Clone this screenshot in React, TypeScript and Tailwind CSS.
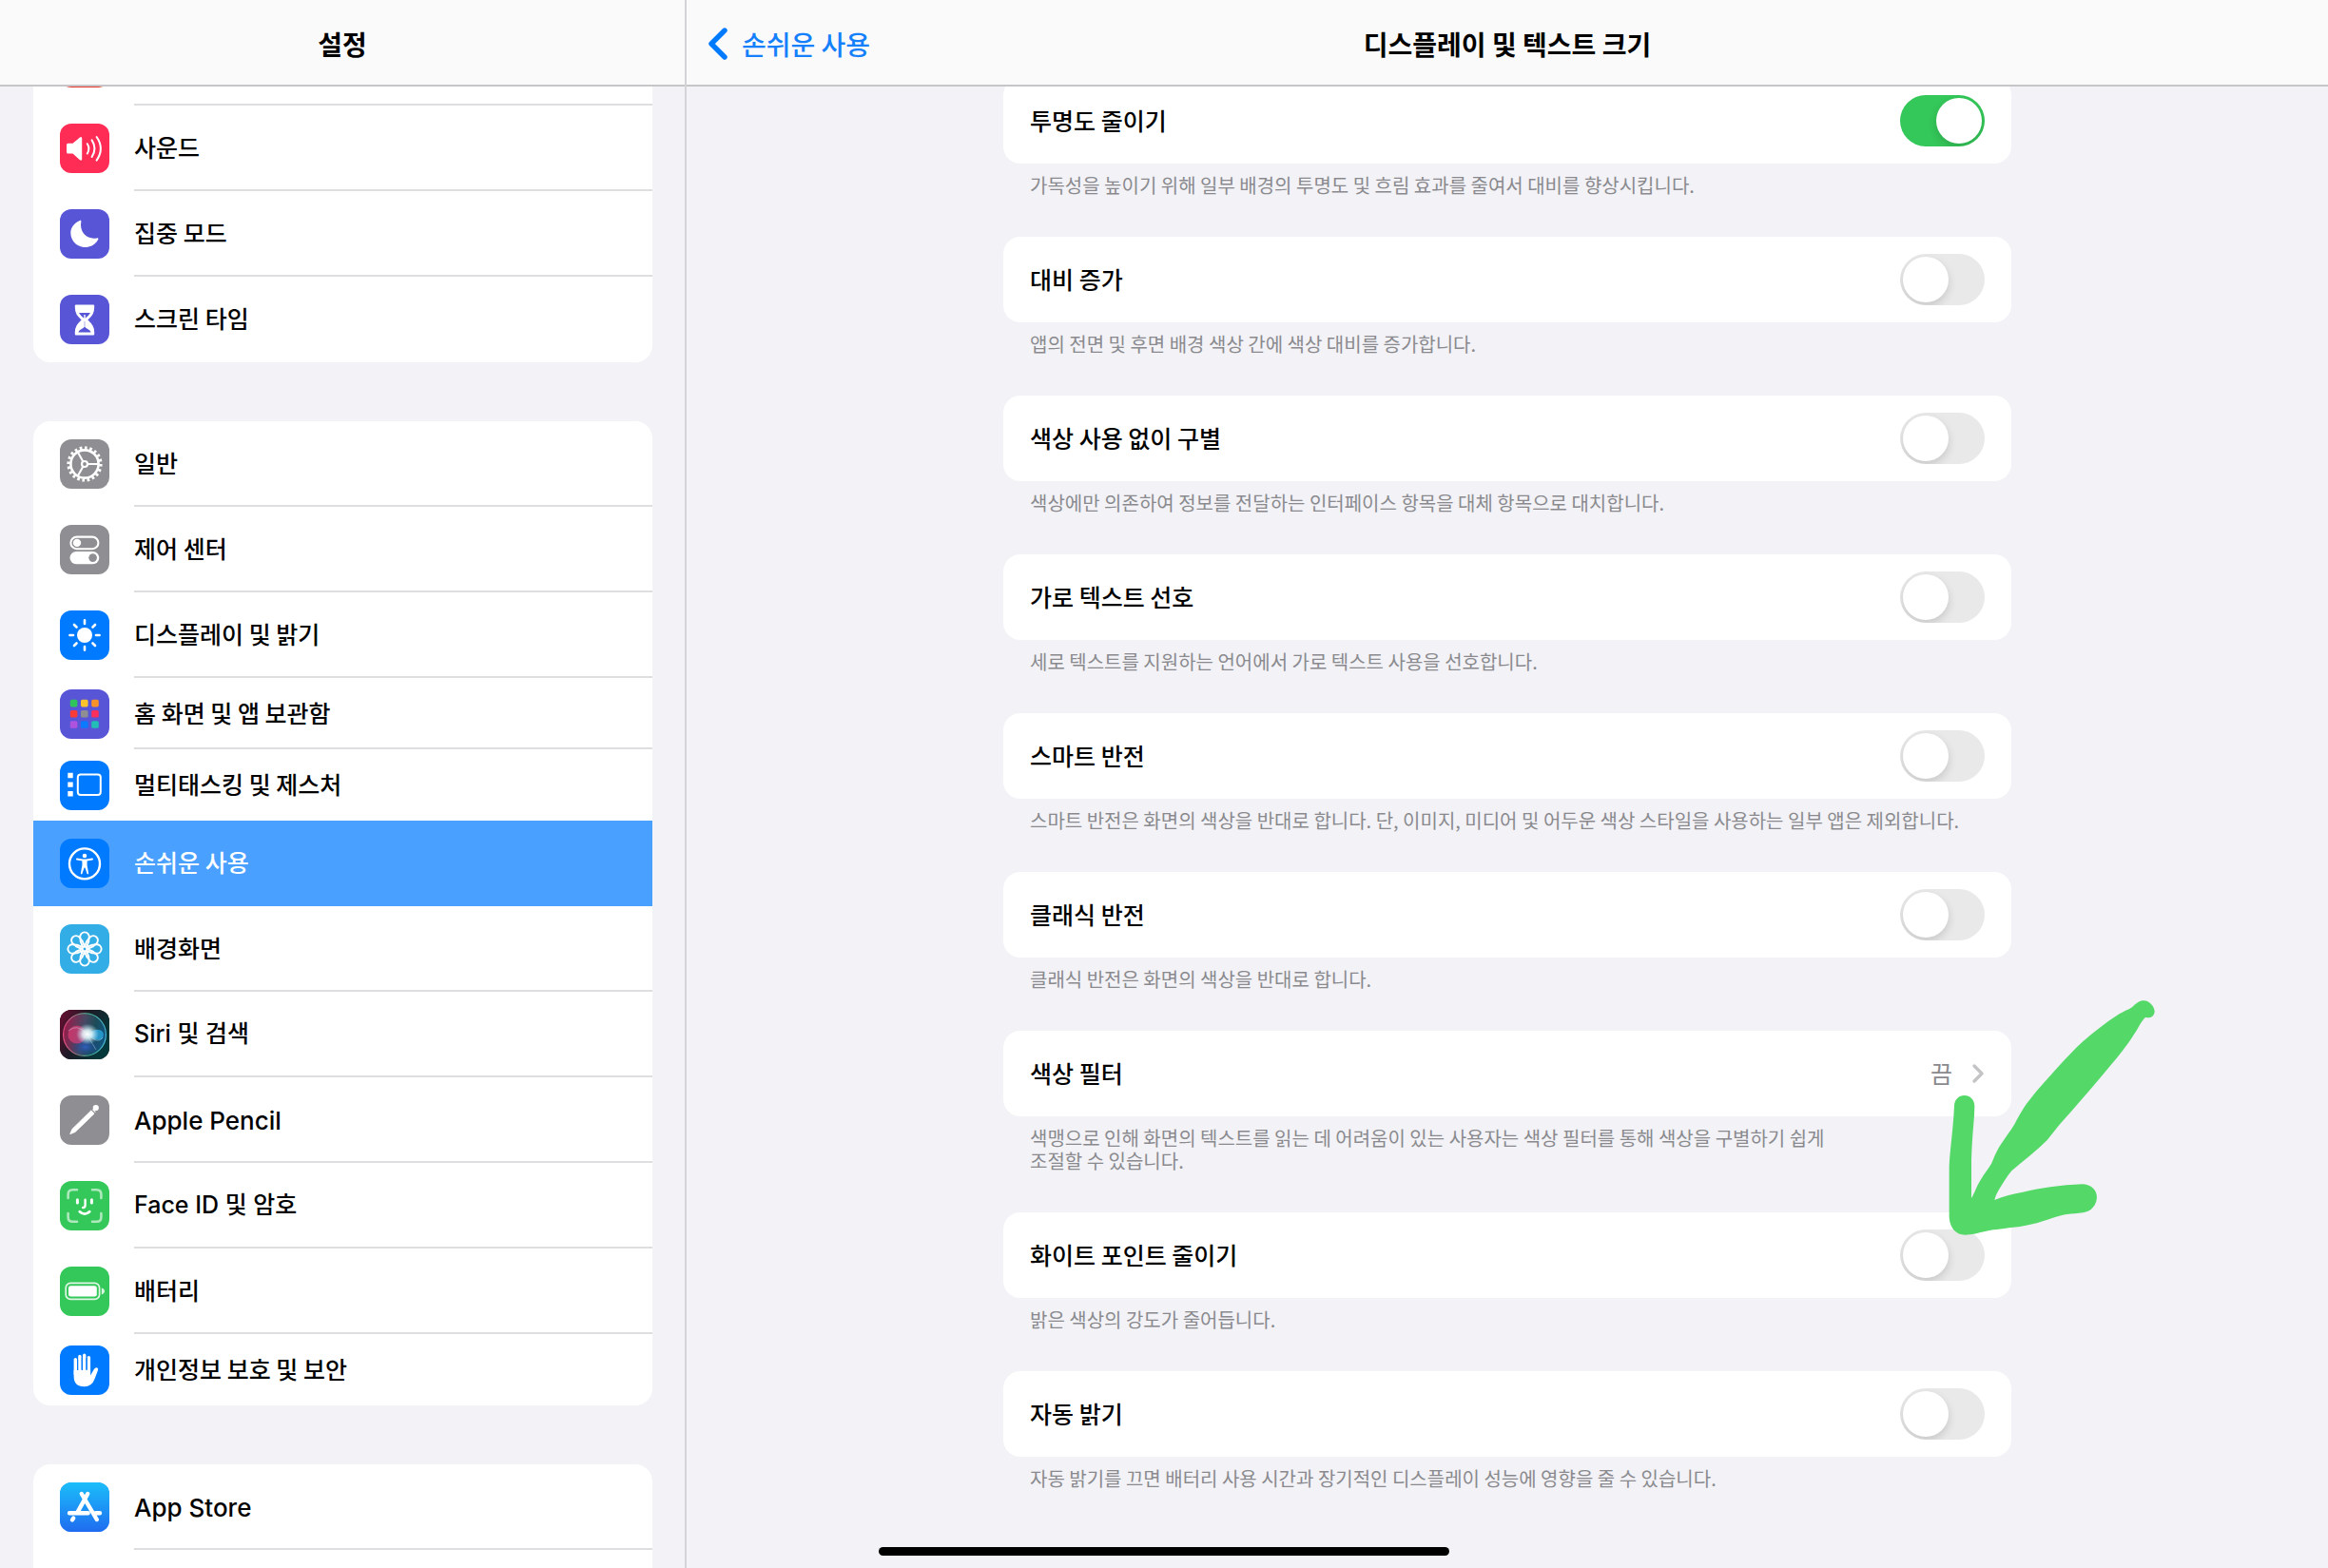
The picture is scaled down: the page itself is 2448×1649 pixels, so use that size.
import { useState } from 'react';
import type { ReactNode } from 'react';
import clsx from 'clsx';

type SidebarItem = {
  id: string;
  label: string;
  icon: ReactNode;
  bg: string;
  compact?: boolean;
  active?: boolean;
  noLine?: boolean;
};

type Option = {
  id: string;
  label: string;
  note: string;
  value?: string;
  marked?: boolean;
};

const SoundIcon = () => (
  <>
    <path d="M8.5 20.8H13.5L21 14.4Q23.2 13 23.2 15.5V37Q23.2 39.6 21 38.2L13.5 31.6H8.5Q7 31.6 7 30V22.4Q7 20.8 8.5 20.8Z" fill="#fff" />
    <path d="M28.8 21.2Q32 26.2 28.8 31.4M33.6 17.4Q39.4 26.2 33.6 35M38.6 14Q47.2 26.2 38.6 38.6" fill="none" stroke="#fff" strokeWidth="2" strokeLinecap="round" />
  </>
);

const MoonIcon = () => (
  <path d="M20.4 12.2C22 11.4 22.6 12 22.3 13.4C20.4 23.8 28 32.2 38.6 30.4C40.4 30.1 40.8 30.8 40 32.2C37.4 37 32.4 40 26.6 40C18 40 11.3 33.4 11.3 25C11.3 19.4 14.8 14.6 20.4 12.2Z" fill="#fff" />
);

const HourglassIcon = () => (
  <>
    <path d="M16.8 11.4H35.2V13C35.2 20 32.6 22 28 26.4C32.6 31 35.2 33.2 35.2 39.6V41.4H16.8V39.6C16.8 33.2 19.4 31 24 26.4C19.4 22 16.8 20 16.8 13Z" fill="#fff" stroke="#fff" strokeWidth="2" strokeLinejoin="round" />
    <path d="M20 19H32Q30.6 21.4 27 24.6H25Q21.4 21.4 20 19ZM19.4 39.4Q19.6 37.6 25.2 34.4V28H26.8V34.4Q32.4 37.6 32.6 39.4Z" fill="#5856d6" />
    <path d="M26 21V34" stroke="#fff" strokeWidth="1.4" />
  </>
);

const GearIcon = () => (
  <g fill="none" stroke="#fff">
    <circle cx="26" cy="26" r="17" strokeWidth="3.2" pathLength="40" strokeDasharray="1 1" />
    <circle cx="26" cy="26" r="14.6" strokeWidth="2.6" />
    <circle cx="26" cy="26" r="3" strokeWidth="2.2" />
    <path d="M29 26H40.6M24.4 23.4L18.8 13.6M24.4 28.6L18.8 38.4" strokeWidth="2.1" />
  </g>
);

const ControlIcon = () => (
  <>
    <rect x="11.4" y="12.6" width="29" height="12.6" rx="6.3" fill="none" stroke="#fff" strokeWidth="2.1" />
    <circle cx="18" cy="18.9" r="4.2" fill="#fff" />
    <rect x="10.5" y="28" width="30.8" height="13.2" rx="6.6" fill="#fff" />
    <circle cx="34.6" cy="34.6" r="4.3" fill="#8e8e93" />
  </>
);

const SunIcon = () => (
  <>
    <circle cx="26" cy="26" r="8" fill="#fff" />
    {[0, 45, 90, 135, 180, 225, 270, 315].map((a) => (
      <path key={a} d="M26 14V10.4" stroke="#fff" strokeWidth="2.6" strokeLinecap="round" transform={`rotate(${a} 26 26)`} />
    ))}
  </>
);

const gridColors = ['#30c45c', '#fcc42c', '#f7922a', '#fa3b36', '#8e8e93', '#fb2f5c', '#ae53de', '#0a7aff', '#22bdb4'];

const HomeGridIcon = () => (
  <>
    {gridColors.map((color, i) => (
      <rect key={color} x={10.8 + (i % 3) * 11.2} y={10.8 + Math.floor(i / 3) * 11.2} width="7.6" height="7.6" rx="1.6" fill={color} />
    ))}
  </>
);

const MultitaskIcon = () => (
  <>
    <rect x="18.8" y="14.6" width="24" height="21.4" rx="3" fill="none" stroke="#fff" strokeWidth="2" />
    <path d="M8.3 12.8h5.4v5.4h-5.4zM8.3 22.4h5.4v5.4h-5.4zM8.3 32h5.4v5.4h-5.4z" fill="#fff" />
  </>
);

const AccessIcon = () => (
  <>
    <circle cx="26" cy="26.4" r="16" fill="none" stroke="#fff" strokeWidth="2.4" />
    <circle cx="26" cy="18" r="2.3" fill="#fff" />
    <path d="M18 21.6L24 22.4H28L34 21.6" fill="none" stroke="#fff" strokeWidth="2" strokeLinecap="round" strokeLinejoin="round" />
    <path d="M23.4 22H28.6V28L30.2 36.6Q29.6 38 28.6 37L26.4 30.6H25.6L23.4 37Q22.4 38 21.8 36.6L23.4 28Z" fill="#fff" />
  </>
);

const FlowerIcon = () => (
  <g fill="none" stroke="#fff" strokeWidth="1.9">
    <circle cx="26" cy="26" r="2.4" />
    {[0, 45, 90, 135, 180, 225, 270, 315].map((a) => (
      <path key={a} d="M26 23.4L23.4 17.2A4.8 4.8 0 1 1 28.6 17.2Z" strokeLinejoin="round" transform={`rotate(${a} 26 26)`} />
    ))}
  </g>
);

const SiriIcon = () => (
  <>
    <defs>
      <linearGradient id="siri-bg" x1="0" y1="0" x2="1" y2="0.5">
        <stop offset="0" stopColor="#6b0d31" />
        <stop offset="0.5" stopColor="#1d1b26" />
        <stop offset="1" stopColor="#04383a" />
      </linearGradient>
      <linearGradient id="siri-orb" x1="0" y1="0.4" x2="1" y2="0.6">
        <stop offset="0" stopColor="#c2215c" />
        <stop offset="0.45" stopColor="#5d6283" />
        <stop offset="0.7" stopColor="#20606d" />
        <stop offset="1" stopColor="#1666ad" />
      </linearGradient>
      <linearGradient id="siri-ring" x1="0" y1="0.5" x2="1" y2="0.5">
        <stop offset="0" stopColor="#e94a82" />
        <stop offset="0.6" stopColor="#3ea887" />
        <stop offset="1" stopColor="#4db7dc" />
      </linearGradient>
      <radialGradient id="siri-glow">
        <stop offset="0" stopColor="#fff" />
        <stop offset="0.4" stopColor="#e5fbff" stopOpacity="0.85" />
        <stop offset="1" stopColor="#bfe9ff" stopOpacity="0" />
      </radialGradient>
      <radialGradient id="siri-low">
        <stop offset="0" stopColor="#2e62c8" stopOpacity="0.9" />
        <stop offset="1" stopColor="#163a88" stopOpacity="0" />
      </radialGradient>
    </defs>
    <rect width="52" height="52" fill="url(#siri-bg)" />
    <circle cx="26" cy="26" r="22" fill="url(#siri-orb)" opacity="0.65" />
    <ellipse cx="27" cy="39" rx="16" ry="11" fill="url(#siri-low)" />
    <circle cx="26" cy="26" r="22.4" fill="none" stroke="url(#siri-ring)" strokeWidth="1.2" />
    <circle cx="18" cy="26" r="9.5" fill="#ef3f7d" opacity="0.6" />
    <path d="M30 26Q37 18 44 22Q48 26 44 31Q37 34 30 26Z" fill="#2aa5dc" opacity="0.8" />
    <path d="M28 25Q18 14 9 22M30 26Q40 37 45 29M29 27L38 42" fill="none" stroke="#d9f6ff" strokeWidth="0.9" opacity="0.4" />
    <ellipse cx="29" cy="25.6" rx="12" ry="11" fill="url(#siri-glow)" />
  </>
);

const PencilIcon = () => (
  <>
    <path d="M10.8 40.6L13 35.4L32.8 16L36 19.2L16 38.4Z" fill="#fff" stroke="#fff" strokeLinejoin="round" />
    <circle cx="37.8" cy="13" r="3.1" fill="#fff" />
    <path d="M34.4 14.6L37.4 17.6" stroke="#fff" strokeWidth="1.2" />
  </>
);

const FaceIcon = () => (
  <g fill="none" stroke="#fff" strokeLinecap="round">
    <path d="M8.6 18V14Q8.6 9.2 13.4 9.2H18M34 9.2H38.6Q43.4 9.2 43.4 14V18M43.4 34V38Q43.4 42.8 38.6 42.8H34M18 42.8H13.4Q8.6 42.8 8.6 38V34" strokeWidth="2.6" opacity="0.6" />
    <path d="M18.4 19.8V23M33.4 19.8V23" strokeWidth="3" />
    <path d="M26.6 19.6V25.6Q26.6 28 24.2 28" strokeWidth="2.4" />
    <path d="M20.8 32.2Q26 37 31.2 32.2" strokeWidth="2.8" />
  </g>
);

const BatteryIcon = () => (
  <>
    <rect x="6.2" y="17.4" width="35.4" height="17" rx="5" fill="none" stroke="#fff" strokeWidth="1.7" opacity="0.85" />
    <rect x="9" y="20.2" width="29.8" height="11.4" rx="2.4" fill="#fff" />
    <path d="M43.8 22.6Q47 23.6 47 26Q47 28.4 43.8 29.4Z" fill="#fff" opacity="0.8" />
  </>
);

const HandIcon = () => (
  <>
    <path d="M16.3 14.6V30M20.9 11.4V28M25.7 10.2V28M30.4 12.6V30" stroke="#fff" strokeWidth="3.4" strokeLinecap="round" />
    <path d="M14.6 26H32.1V31.4L36 24.8Q37.4 22.6 39.4 23.4Q40.6 24 40 26L36.6 35Q33.6 43.3 25.6 43.3Q14.6 43.3 14.6 32.6Z" fill="#fff" />
    <path d="M18.6 15V26M23.3 13V25M28.1 13V25" stroke="#007aff" strokeWidth="1" />
  </>
);

const StoreIcon = () => (
  <>
    <defs>
      <linearGradient id="store-bg" x1="0" y1="0" x2="0" y2="1">
        <stop offset="0" stopColor="#1bbefa" />
        <stop offset="1" stopColor="#1f6cf0" />
      </linearGradient>
    </defs>
    <rect width="52" height="52" fill="url(#store-bg)" />
    <g fill="none" stroke="#fff" strokeWidth="4.4" strokeLinecap="round">
      <path d="M29.2 12L18.4 31.6M22.8 12L38.8 39M10 32.2H29.6M37.6 32.2H42" />
      <path d="M14.2 37.6L13 39.4" />
    </g>
  </>
);

const groups: SidebarItem[][] = [
  [
    { id: 'alerts', label: '', icon: null, bg: 'bg-[#e8382e]' },
    { id: 'sound', label: '사운드', icon: <SoundIcon />, bg: 'bg-[#ff2d55]' },
    { id: 'focus', label: '집중 모드', icon: <MoonIcon />, bg: 'bg-[#5856d6]' },
    { id: 'screentime', label: '스크린 타임', icon: <HourglassIcon />, bg: 'bg-[#5856d6]' },
  ],
  [
    { id: 'general', label: '일반', icon: <GearIcon />, bg: 'bg-[#8e8e93]' },
    { id: 'control', label: '제어 센터', icon: <ControlIcon />, bg: 'bg-[#8e8e93]' },
    { id: 'display', label: '디스플레이 및 밝기', icon: <SunIcon />, bg: 'bg-[#007aff]' },
    { id: 'home', label: '홈 화면 및 앱 보관함', icon: <HomeGridIcon />, bg: 'bg-[#5856d6]', compact: true },
    { id: 'multitask', label: '멀티태스킹 및 제스처', icon: <MultitaskIcon />, bg: 'bg-[#007aff]', compact: true, noLine: true },
    { id: 'access', label: '손쉬운 사용', icon: <AccessIcon />, bg: 'bg-[#007aff]', active: true, noLine: true },
    { id: 'wallpaper', label: '배경화면', icon: <FlowerIcon />, bg: 'bg-[#32ade6]' },
    { id: 'siri', label: 'Siri 및 검색', icon: <SiriIcon />, bg: 'bg-black' },
    { id: 'pencil', label: 'Apple Pencil', icon: <PencilIcon />, bg: 'bg-[#8e8e93]' },
    { id: 'faceid', label: 'Face ID 및 암호', icon: <FaceIcon />, bg: 'bg-[#34c759]' },
    { id: 'battery', label: '배터리', icon: <BatteryIcon />, bg: 'bg-[#34c759]' },
    { id: 'privacy', label: '개인정보 보호 및 보안', icon: <HandIcon />, bg: 'bg-[#007aff]', compact: true },
  ],
  [
    { id: 'appstore', label: 'App Store', icon: <StoreIcon />, bg: 'bg-[#1f8cf5]' },
    { id: 'wallet', label: '', icon: null, bg: 'bg-transparent' },
  ],
];

const options: Option[] = [
  { id: 'transparency', label: '투명도 줄이기', note: '가독성을 높이기 위해 일부 배경의 투명도 및 흐림 효과를 줄여서 대비를 향상시킵니다.' },
  { id: 'contrast', label: '대비 증가', note: '앱의 전면 및 후면 배경 색상 간에 색상 대비를 증가합니다.' },
  { id: 'nocolor', label: '색상 사용 없이 구별', note: '색상에만 의존하여 정보를 전달하는 인터페이스 항목을 대체 항목으로 대치합니다.' },
  { id: 'horizontal', label: '가로 텍스트 선호', note: '세로 텍스트를 지원하는 언어에서 가로 텍스트 사용을 선호합니다.' },
  { id: 'smart', label: '스마트 반전', note: '스마트 반전은 화면의 색상을 반대로 합니다. 단, 이미지, 미디어 및 어두운 색상 스타일을 사용하는 일부 앱은 제외합니다.' },
  { id: 'classic', label: '클래식 반전', note: '클래식 반전은 화면의 색상을 반대로 합니다.' },
  { id: 'filter', label: '색상 필터', value: '끔', note: '색맹으로 인해 화면의 텍스트를 읽는 데 어려움이 있는 사용자는 색상 필터를 통해 색상을 구별하기 쉽게\n조절할 수 있습니다.' },
  { id: 'whitepoint', label: '화이트 포인트 줄이기', note: '밝은 색상의 강도가 줄어듭니다.', marked: true },
  { id: 'autobright', label: '자동 밝기', note: '자동 밝기를 끄면 배터리 사용 시간과 장기적인 디스플레이 성능에 영향을 줄 수 있습니다.' },
];

const hasLatin = (text: string) => /[A-Za-z]/.test(text);
const isLatin = (text: string) => /^[A-Za-z ]+$/.test(text);

const SidebarRow = ({ item, last }: { item: SidebarItem; last: boolean }) => (
  <a
    href={`#${item.id}`}
    aria-current={item.active ? 'page' : undefined}
    className={clsx('flex items-center pl-7', item.compact ? 'h-[75px]' : 'h-[90px]', item.active && 'bg-[#4aa0ff] text-white')}
  >
    <span className={clsx('size-[52px] shrink-0 overflow-hidden rounded-xl', item.bg)}>
      <svg viewBox="0 0 52 52" className="size-full" aria-hidden="true">{item.icon}</svg>
    </span>
    <span
      className={clsx(
        'ml-[26px] flex flex-1 items-center self-stretch border-b-2 font-medium',
        isLatin(item.label) ? 'text-[26px]' : 'text-[25px]',
        last || item.noLine ? 'border-transparent' : 'border-[#dedee0]',
        hasLatin(item.label) && "pt-[2px] font-['Inter','Noto_Sans_CJK_KR',sans-serif]",
      )}
    >
      {item.label}
    </span>
  </a>
);

const Arrow = () => (
  <svg viewBox="260 60 660 750" className="pointer-events-none absolute -top-[225px] -right-[152px] h-[250px] w-[220px]" aria-hidden="true">
    <path
      fill="#54d969"
      d="M316 366C334 366 348 380 348 400L347 430C342 490 338 540 338 590V690C350 670 352 660 360 645C375 618 390 600 402 580C410 562 415 545 430 522C445 498 460 480 475 455C490 428 500 408 518 385C550 342 580 312 615 272C640 246 665 218 690 196C725 165 760 138 800 112C820 100 835 95 845 88C858 75 868 67 882 67C900 68 914 84 916 100C916 112 908 121 898 121C893 121 890 119 886 121C872 134 865 155 850 175C830 208 800 245 770 280C730 328 690 375 650 420C620 452 600 478 577 507C545 540 500 573 465 604C450 622 445 632 433 650C422 668 415 678 411 696C440 684 470 676 500 671C550 660 620 648 690 646C718 648 734 665 734 688C732 715 715 732 690 736C665 739 640 740 615 746C560 763 530 776 470 782C430 787 400 790 385 794C360 799 340 806 318 806C290 806 270 785 268 750V590C270 540 280 480 284 400C284 380 298 366 316 366Z"
    />
  </svg>
);

const OptionSection = ({ option, checked, onToggle }: { option: Option; checked: boolean; onToggle: () => void }) => (
  <section className="pb-[42px]">
    <div className="relative">
      {option.value ? (
        <a href={`#${option.id}`} className="flex h-[90px] items-center rounded-[18px] bg-white px-7 text-[25px] font-medium">
          <span className="flex-1">{option.label}</span>
          <span className="mr-5 font-normal text-[#8a8a8e]">{option.value}</span>
          <svg viewBox="0 0 14 22" className="h-[22px] w-[14px]" aria-hidden="true">
            <path d="M3 3L11 11L3 19" fill="none" stroke="#c4c4c7" strokeWidth="3.4" strokeLinecap="round" strokeLinejoin="round" />
          </svg>
        </a>
      ) : (
        <label htmlFor={option.id} className="flex h-[90px] items-center rounded-[18px] bg-white px-7 text-[25px] font-medium">
          <span className="flex-1">{option.label}</span>
          <input
            id={option.id}
            type="checkbox"
            checked={checked}
            onChange={onToggle}
            className="h-[54px] w-[89px] appearance-none overflow-hidden rounded-full bg-[#e9e9ea] p-[3px] before:block before:size-12 before:rounded-full before:bg-white before:shadow-[0_4px_10px_rgba(0,0,0,0.15)] checked:bg-[#34c759] checked:before:ml-[35px]"
          />
        </label>
      )}
      {option.marked && <Arrow />}
    </div>
    <p className="px-7 pt-[11px] text-[20px] leading-6 break-keep whitespace-pre-line text-[#8a8a8e]">{option.note}</p>
  </section>
);

export default function App() {
  const [enabled, setEnabled] = useState<Record<string, boolean>>({ transparency: true });

  return (
    <div className="relative grid h-screen grid-cols-[5fr_12fr] overflow-hidden bg-[#f2f2f7] font-['Noto_Sans_CJK_KR',sans-serif] text-black">
      <aside className="flex min-h-0 flex-col">
        <header className="z-10 flex h-[91px] shrink-0 items-center justify-center border-b-2 border-[#c6c6c8] bg-[#fafafa] pt-[2px]">
          <h2 className="text-[28px] font-bold">설정</h2>
        </header>
        <nav className="-mt-[70px] flex flex-col gap-[62px] pr-[34px] pl-[35px]">
          {groups.map((group) => (
            <div key={group[0].id} className="overflow-hidden rounded-[18px] bg-white">
              {group.map((item, i) => (
                <SidebarRow key={item.id} item={item} last={i === group.length - 1} />
              ))}
            </div>
          ))}
        </nav>
      </aside>

      <main className="flex min-h-0 flex-col border-l-2 border-[#d4d4d8]">
        <header className="z-10 grid h-[91px] shrink-0 grid-cols-[1fr_auto_1fr] items-center border-b-2 border-[#c6c6c8] bg-[#fafafa] pt-[2px]">
          <a href="#access" className="flex items-center gap-3 pl-5 text-[28px] font-medium text-[#1480fb]">
            <svg viewBox="0 0 26 36" className="h-9 w-[26px]" aria-hidden="true">
              <path d="M20 4L6 18L20 32" fill="none" stroke="#007aff" strokeWidth="5.4" strokeLinecap="round" strokeLinejoin="round" />
            </svg>
            손쉬운 사용
          </a>
          <h1 className="text-[28px] font-bold">디스플레이 및 텍스트 크기</h1>
        </header>
        <div className="mx-auto -mt-[9px] w-full max-w-[1060px]">
          {options.map((option) => (
            <OptionSection
              key={option.id}
              option={option}
              checked={!!enabled[option.id]}
              onToggle={() => setEnabled({ ...enabled, [option.id]: !enabled[option.id] })}
            />
          ))}
        </div>
      </main>

      <div className="absolute bottom-[13px] left-1/2 h-[9px] w-[600px] -translate-x-1/2 rounded-full bg-black" />
    </div>
  );
}
